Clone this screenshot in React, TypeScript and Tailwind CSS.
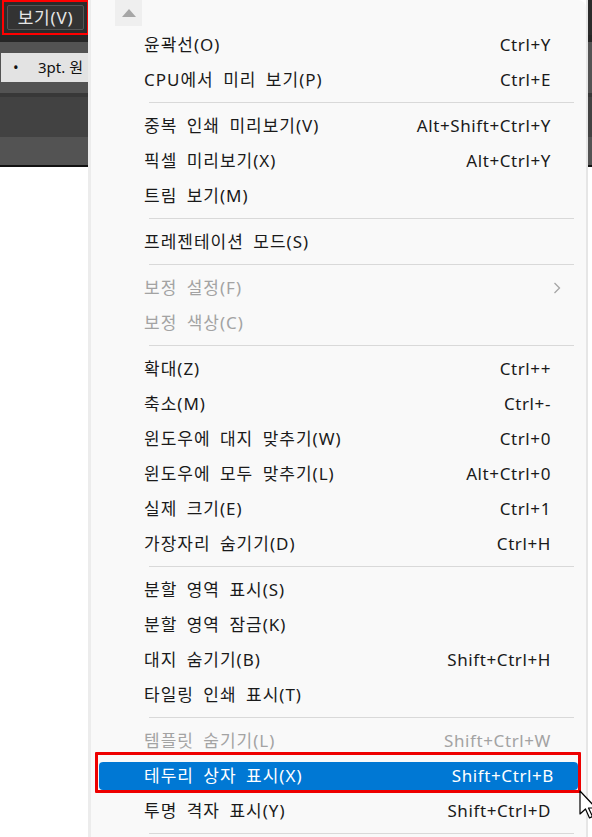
import React from "react";

type Item =
  | { type: "sep" }
  | { type: "item"; label: string; shortcut?: string; disabled?: boolean; submenu?: boolean; active?: boolean };

const items: Item[] = [
  { type: "item", label: "윤곽선(O)", shortcut: "Ctrl+Y" },
  { type: "item", label: "CPU에서 미리 보기(P)", shortcut: "Ctrl+E" },
  { type: "sep" },
  { type: "item", label: "중복 인쇄 미리보기(V)", shortcut: "Alt+Shift+Ctrl+Y" },
  { type: "item", label: "픽셀 미리보기(X)", shortcut: "Alt+Ctrl+Y" },
  { type: "item", label: "트림 보기(M)" },
  { type: "sep" },
  { type: "item", label: "프레젠테이션 모드(S)" },
  { type: "sep" },
  { type: "item", label: "보정 설정(F)", disabled: true, submenu: true },
  { type: "item", label: "보정 색상(C)", disabled: true },
  { type: "sep" },
  { type: "item", label: "확대(Z)", shortcut: "Ctrl++" },
  { type: "item", label: "축소(M)", shortcut: "Ctrl+-" },
  { type: "item", label: "윈도우에 대지 맞추기(W)", shortcut: "Ctrl+0" },
  { type: "item", label: "윈도우에 모두 맞추기(L)", shortcut: "Alt+Ctrl+0" },
  { type: "item", label: "실제 크기(E)", shortcut: "Ctrl+1" },
  { type: "item", label: "가장자리 숨기기(D)", shortcut: "Ctrl+H" },
  { type: "sep" },
  { type: "item", label: "분할 영역 표시(S)" },
  { type: "item", label: "분할 영역 잠금(K)" },
  { type: "item", label: "대지 숨기기(B)", shortcut: "Shift+Ctrl+H" },
  { type: "item", label: "타일링 인쇄 표시(T)" },
  { type: "sep" },
  { type: "item", label: "템플릿 숨기기(L)", shortcut: "Shift+Ctrl+W", disabled: true },
  { type: "item", label: "테두리 상자 표시(X)", shortcut: "Shift+Ctrl+B", active: true },
  { type: "item", label: "투명 격자 표시(Y)", shortcut: "Shift+Ctrl+D" },
  { type: "sep" },
];

const font = { fontFamily: '"Noto Sans", "Noto Sans CJK KR", sans-serif' };

function SideBands({ withContent }: { withContent?: boolean }) {
  return (
    <div className="flex flex-col h-full">
      <div className="h-[35px] bg-[#2b2b2b] shrink-0 relative">
        {withContent && (
          <div className="absolute left-[2px] top-0 w-[87px] h-[35px] border-2 border-[#ff0000] p-[3px]">
            <div className="w-full h-full bg-[#333333] border border-[#555555] rounded-[2px] flex items-center justify-center text-[17px] text-[#e6e6e6] tracking-[0.8px] whitespace-nowrap">
              보기(V)
            </div>
          </div>
        )}
      </div>
      <div className="h-[7px] bg-[#262626] shrink-0" />
      <div className="h-[11px] bg-[#535353] shrink-0" />
      <div className="h-[29px] bg-[#535353] shrink-0 flex">
        {withContent && (
          <div className="ml-[1px] flex-1 bg-[#e3e3e3] flex items-center text-[15px] text-[#111] whitespace-nowrap">
            <span className="ml-[12px] w-[25px] shrink-0">•</span>
            <span className="shrink-0">3pt. 원</span>
          </div>
        )}
      </div>
      <div className="h-[11px] bg-[#535353] shrink-0" />
      <div className="h-[4px] bg-[#383838] shrink-0" />
      <div className="h-[40px] bg-[#424242] shrink-0" />
      <div className="h-[28px] bg-[#535353] shrink-0" />
      <div className="h-[2px] bg-[#111111] shrink-0" />
      <div className="flex-1 bg-white" />
    </div>
  );
}

export default function App() {
  return (
    <div className="w-[592px] h-[837px] overflow-hidden flex bg-white text-[#1a1a1a]" style={font}>
      <div className="w-[88px] shrink-0">
        <SideBands withContent />
      </div>
      <div className="w-[498px] shrink-0 bg-[#f9f9f9] border-l-[3px] border-[#ececec] rounded-tr-[8px] flex flex-col relative">
        <div className="h-[27px] shrink-0">
          <div className="ml-[24px] w-[27px] h-[26px] bg-[#efefef] flex items-center justify-center">
            <svg width="14" height="8" viewBox="0 0 14 8">
              <polygon points="0,8 7,0 14,8" fill="#a6a6a6" />
            </svg>
          </div>
        </div>
        {items.map((it, i) => {
          if (it.type === "sep") {
            return (
              <div key={i} className="h-[11px] shrink-0 flex items-center">
                <div className="ml-[58px] mr-[12px] flex-1 h-px bg-[#d9d9d9]" />
              </div>
            );
          }
          if (it.active) {
            return (
              <div key={i} className="h-[35px] shrink-0 relative flex items-center">
                <div className="mx-[8px] flex-1 h-[28px] rounded-[4px] bg-[#0078d4] text-white flex items-center justify-between pl-[45px] pr-[24px] text-[17px] whitespace-nowrap">
                  <span className="tracking-[1px] [word-spacing:4px]">{it.label}</span>
                  <span className="tracking-[0.6px]">{it.shortcut}</span>
                </div>
                <div className="absolute left-[4px] right-[5px] top-[-6px] bottom-[0px] border-[3px] border-[#ee0000] rounded-[1px]" />
              </div>
            );
          }
          return (
            <div
              key={i}
              className={
                "h-[35px] shrink-0 flex items-center justify-between pl-[53px] pr-[35px] text-[17px] whitespace-nowrap " +
                (it.disabled ? "text-[#a3a3a3]" : "text-[#1a1a1a]")
              }
            >
              <span className="tracking-[1px] [word-spacing:4px]">{it.label}</span>
              {it.shortcut && <span className="tracking-[0.6px]">{it.shortcut}</span>}
              {it.submenu && (
                <svg width="8" height="12" viewBox="0 0 8 12" className="mr-[-10px]">
                  <polyline points="1.5,1 6.5,6 1.5,11" fill="none" stroke="#a6a6a6" strokeWidth="1.3" />
                </svg>
              )}
            </div>
          );
        })}
        <svg
          className="absolute left-[488px] top-[790px]"
          width="18"
          height="30"
          viewBox="0 0 18 30"
        >
          <path d="M1,1 L1,24 L6.5,19 L10.5,28 L13.5,26.5 L9.5,18 L17,18 Z" fill="#ffffff" stroke="#000000" strokeWidth="1.2" strokeLinejoin="round" />
        </svg>
      </div>
      <div className="flex-1 border-l-2 border-[#e6e6e6]">
        <SideBands />
      </div>
    </div>
  );
}
